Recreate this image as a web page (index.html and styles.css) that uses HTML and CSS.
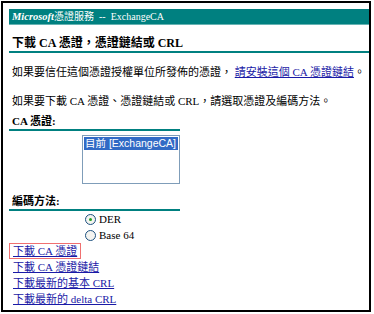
FILE: index.html
```html
<html lang="zh-Hant">
<head>
  <meta charset="UTF-8">
  <title>Microsoft 憑證服務</title>
  <link rel="stylesheet" href="styles.css">
</head>
<body>
  <div class="window">
    <div class="banner"><span class="ms">Microsoft</span>憑證服務 &nbsp;-- &nbsp;ExchangeCA</div>

    <h1 class="title">下載 CA 憑證，憑證鏈結或 CRL</h1>

    <p class="text">如果要信任這個憑證授權單位所發佈的憑證， <a href="#">請安裝這個 CA 憑證鏈結</a>。</p>
    <p class="text gap">如果要下載 CA 憑證、憑證鏈結或 CRL，請選取憑證及編碼方法。</p>

    <div class="section">CA 憑證:</div>
    <div class="listbox">
      <div class="option selected">目前 [ExchangeCA]</div>
    </div>

    <div class="section second">編碼方法:</div>
    <div class="radios">
      <label class="radio"><span class="dot checked"></span>DER</label>
      <label class="radio"><span class="dot"></span>Base 64</label>
    </div>

    <div class="links">
      <div class="link-row"><span class="marked"><a href="#">下載 CA 憑證</a></span></div>
      <div class="link-row"><a href="#">下載 CA 憑證鏈結</a></div>
      <div class="link-row"><a href="#">下載最新的基本 CRL</a></div>
      <div class="link-row"><a href="#">下載最新的 delta CRL</a></div>
    </div>
  </div>
</body>
</html>
```

FILE: styles.css
```css
body {
  margin: 0;
  background: #fff;
  font-family: "Liberation Serif", "Noto Sans CJK TC", serif;
  font-size: 11px;
  color: #000;
}

.window {
  margin: 1px;
  width: 370px;
  height: 311px;
  box-sizing: border-box;
  border: 2px solid #000;
  padding: 6px 0 0 6px;
  overflow: hidden;
}

.banner {
  background: #008080;
  border-bottom: 1px solid #66b3b3;
  color: #fff;
  height: 15px;
  line-height: 15px;
  padding-left: 3px;
  font-size: 10px;
  white-space: nowrap;
}

.ms {
  font-weight: bold;
  font-style: italic;
  font-size: 10.5px;
  font-family: "Liberation Serif", serif;
}

.title {
  margin: 11px 0 0;
  padding-left: 3px;
  font-size: 12px;
  line-height: 15px;
  font-weight: bold;
  border-bottom: 2px solid #008080;
}

.text {
  margin: 11px 0 0;
  padding-left: 3px;
  line-height: 16px;
  white-space: nowrap;
}

.text.gap { margin-top: 13px; }

a {
  color: #1a1aa6;
  text-decoration: underline;
}

.section {
  margin: 5px 0 0;
  padding-left: 3px;
  width: 168px;
  font-weight: bold;
  line-height: 15px;
  border-bottom: 2px solid #008080;
}

.section.second { margin-top: 10px; }

.listbox {
  margin: 4px 0 0 73px;
  width: 98px;
  height: 49px;
  box-sizing: border-box;
  border: 1px solid #7f9db9;
  padding: 1px;
  font-family: "Liberation Sans", "Noto Sans CJK TC", sans-serif;
  font-size: 10.5px;
}

.option {
  line-height: 13px;
  padding-left: 1px;
  white-space: nowrap;
}

.option.selected {
  background: #316ac5;
  color: #fff;
}

.radios {
  margin: 0 0 0 76px;
  display: flex;
  flex-direction: column;
}

.radio {
  display: flex;
  align-items: center;
  gap: 3px;
  line-height: 16px;
}

.dot {
  width: 9px;
  height: 9px;
  border: 1px solid #1c5180;
  border-radius: 50%;
  background: #f4f4f0;
  display: flex;
  align-items: center;
  justify-content: center;
}

.dot.checked::after {
  content: "";
  width: 3px;
  height: 3px;
  border-radius: 50%;
  background: #21a121;
}

.links {
  padding-left: 4px;
}

.link-row {
  line-height: 16px;
  height: 16px;
  white-space: nowrap;
}

.marked {
  display: inline-block;
  margin-left: -4px;
  padding: 0 3px;
  border: 1px solid #f07070;
  line-height: 14px;
  vertical-align: top;
}
```
